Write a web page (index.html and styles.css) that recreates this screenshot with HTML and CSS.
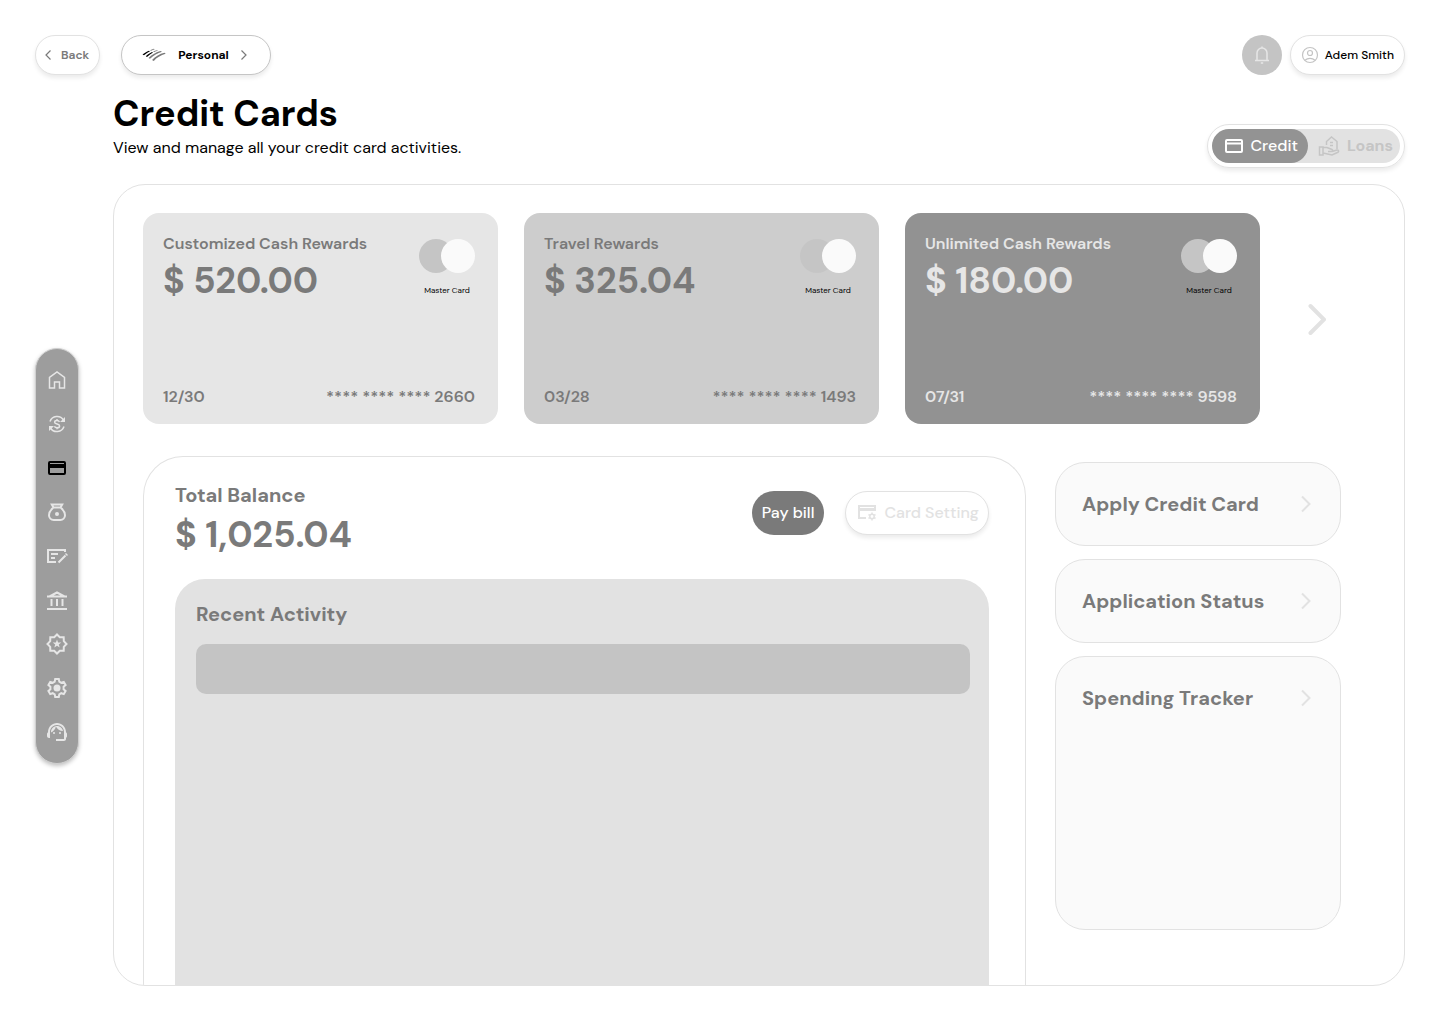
FILE: index.html
```
<!DOCTYPE html>
<html lang="en">
<head>
    <meta charset="UTF-8">
    <meta name="viewport" content="width=device-width, initial-scale=1.0">
    <title>Credit Cards</title>
    <link rel="stylesheet" href="styles.css">
</head>
<body>
    <header class="topbar">
        <button class="pill back">
            <svg width="6" height="10" viewBox="0 0 6 10"><path d="M5.500 .5 1 5l4.500 4.500"/></svg>
            Back
        </button>
        <button class="pill account">
            <svg class="logo" width="24" height="14" viewBox="0 0 24 14">
                <path class="dark" d="M.5 6.600C2.500 5 4.500 3.700 7 2.700l1 .5C6 4.300 4 5.700 2 7.300zM3.800 8.300C5.500 6.700 7.500 5.200 10 4l1 .5C9 5.800 7 7.300 5 9z"/>
                <path d="M8 2.200c1.300-.6 2.500-1 3.800-1.400l1 .5c-1.400.4-2.700.8-3.800 1.400zM11 3.500c1.400-.6 2.700-1 4-1.300l1 .5c-1.400.3-2.700.7-3.800 1.300zM6.500 10C10 6.500 14 4.200 18.500 3l1.500.8C15.500 5.200 11.500 7.500 8 10.700zM10 12C13.500 8.600 17.500 5.900 22.500 4.800l1.200 1C18.500 7.300 14.800 9.600 11.800 13z"/>
            </svg>
            <span>Personal</span>
            <svg width="6" height="10" viewBox="0 0 6 10"><path d="M.5 .5 5 5 .5 9.500"/></svg>
        </button>
        <button class="bell" aria-label="Notifications">
            <svg width="16" height="20" viewBox="0 0 16 20"><path d="M1 15.500h14M3 15.500V8a5 5 0 0 1 10 0v7.500M8 3V1.500M6.800 18h2.400"/></svg>
        </button>
        <button class="pill user">
            <svg width="18" height="18" viewBox="0 0 18 18"><circle cx="9" cy="9" r="7.500"/><circle cx="9" cy="7" r="2.500"/><path d="M4 14.300c2.800-2.700 7.200-2.700 10 0"/></svg>
            Adem Smith
        </button>
    </header>

    <div class="layout">
        <nav class="sidebar">
            <a href="#" aria-label="Home">
                <svg viewBox="0 0 24 24"><path d="M4.500 20V9.500L12 4l7.500 5.500V20h-5v-6h-5v6z"/></svg>
            </a>
            <a href="#" aria-label="Transfers">
                <svg viewBox="0 0 24 24"><path d="M5 9.500A7.500 7.500 0 0 1 18.500 8M19 14.500A7.500 7.500 0 0 1 5.500 16M14.500 9.800C14 8.900 13.200 8.500 12 8.500c-1.400 0-2.400.6-2.400 1.700 0 2.400 5 1.200 5 3.700 0 1.100-1 1.800-2.500 1.800-1.400 0-2.300-.6-2.700-1.500M12 7v1.500M12 15.700v1.500"/><path class="fill" d="M20 5v5h-5zM4 19v-5h5z"/></svg>
            </a>
            <a href="#" class="active" aria-label="Credit cards">
                <svg class="bold" viewBox="0 0 24 24"><rect x="4" y="6" width="16" height="12" rx="1"/><path class="fill" d="M4 8h16v4H4z"/></svg>
            </a>
            <a href="#" aria-label="Savings">
                <svg class="bold" viewBox="0 0 24 24"><path d="M8.500 7.500 6.800 4.500h10.400l-1.700 3h-7C5.500 10 4 12.500 4 15.300A4.700 4.700 0 0 0 8.700 20h6.600a4.700 4.700 0 0 0 4.700-4.700c0-2.800-1.500-5.300-4.500-7.800"/><circle class="fill" cx="12" cy="14" r="2"/></svg>
            </a>
            <a href="#" aria-label="Checks">
                <svg viewBox="0 0 24 24"><path class="bold" d="M11 18H3V6h17v2M6 10h7M6 14h4M13.500 18.500l7-7"/><path d="m20.500 9.500 2 2"/></svg>
            </a>
            <a href="#" aria-label="Bank">
                <svg class="bold" viewBox="0 0 24 24"><path d="M2 21h20M4.500 8.500h15L12 4.500zM2 8.500h20M6.500 11v7M12 11v7M17.500 11v7"/></svg>
            </a>
            <a href="#" aria-label="Rewards">
                <svg class="bold" viewBox="0 0 24 24"><path d="m12 2.500 2.800 2.700 3.900.1.100 3.900L21.500 12l-2.700 2.800-.1 3.900-3.900.1L12 21.500l-2.800-2.700-3.900-.1-.1-3.900L2.500 12l2.700-2.800.1-3.900 3.900-.1z"/><path class="fill" d="m12 7.500 1.100 3h3.200l-2.500 1.900.9 3.100-2.700-1.800-2.700 1.800.9-3.100-2.500-1.900h3.200z"/></svg>
            </a>
            <a href="#" aria-label="Settings">
                <svg class="bold" viewBox="0 0 24 24"><path d="M10.200 3h3.600l.5 2.600 2 1.200 2.500-.9 1.800 3.100-2 1.700v2.600l2 1.700-1.800 3.100-2.500-.9-2 1.200-.5 2.600h-3.600l-.5-2.600-2-1.200-2.500.9L3.400 15l2-1.700v-2.600L3.400 9l1.800-3.100 2.500.9 2-1.200z"/><circle class="fill" cx="12" cy="12" r="3.500"/></svg>
            </a>
            <a href="#" aria-label="Support">
                <svg viewBox="0 0 24 24"><path class="fill" d="M21 12.220C21 6.730 16.740 3 12 3c-4.690 0-9 3.650-9 9.280-.6.340-1 .980-1 1.720v2c0 1.100.9 2 2 2h1v-6.100c0-3.870 3.130-7 7-7s7 3.130 7 7V19h-8v2h8c1.100 0 2-.9 2-2v-1.220c.590-.310 1-.920 1-1.640v-2.300c0-.7-.410-1.310-1-1.620z"/><circle class="fill" cx="9" cy="13" r="1"/><circle class="fill" cx="15" cy="13" r="1"/><path class="fill" d="M18 11.030C17.520 8.180 15.040 6 12.050 6c-3.030 0-6.290 2.510-6.030 6.450 2.470-1.010 4.330-3.210 4.860-5.890 1.310 2.630 4 4.440 7.120 4.470z"/></svg>
            </a>
        </nav>

        <main class="content">
            <div class="heading">
                <div class="heading-text">
                    <h1>Credit Cards</h1>
                    <p>View and manage all your credit card activities.</p>
                </div>
                <div class="switch">
                    <button class="tab selected">
                        <svg width="20" height="16" viewBox="0 0 20 16"><rect x="2" y="2" width="16" height="12" rx="1"/><path d="M2 5.500h16"/></svg>
                        Credit
                    </button>
                    <button class="tab">
                        <svg width="22" height="22" viewBox="0 0 22 22"><path d="M8.500 10V6.500L13.500 2l5.500 4.500V14M12 7.500h3M12 10.500h3M1.500 12H5v8H1.500zM5 12.500h4l5 2c1 .5.800 2-.5 2H10M14 16.500l5-1.500c1.500-.2 2.200 1.500 1 2.300L14 20l-9-2"/></svg>
                        Loans
                    </button>
                </div>
            </div>

            <section class="panel">
                <div class="cards">
                    <article class="card card-light">
                        <div class="card-top">
                            <div>
                                <h2>Customized Cash Rewards</h2>
                                <p class="amount">$ 520.00</p>
                            </div>
                            <div class="brand">
                                <div class="circles"><i></i><i></i></div>
                                <span>Master Card</span>
                            </div>
                        </div>
                        <div class="card-bottom"><span>12/30</span><span>**** **** **** 2660</span></div>
                    </article>
                    <article class="card card-medium">
                        <div class="card-top">
                            <div>
                                <h2>Travel Rewards</h2>
                                <p class="amount">$ 325.04</p>
                            </div>
                            <div class="brand">
                                <div class="circles"><i></i><i></i></div>
                                <span>Master Card</span>
                            </div>
                        </div>
                        <div class="card-bottom"><span>03/28</span><span>**** **** **** 1493</span></div>
                    </article>
                    <article class="card card-dark">
                        <div class="card-top">
                            <div>
                                <h2>Unlimited Cash Rewards</h2>
                                <p class="amount">$ 180.00</p>
                            </div>
                            <div class="brand">
                                <div class="circles"><i></i><i></i></div>
                                <span>Master Card</span>
                            </div>
                        </div>
                        <div class="card-bottom"><span>07/31</span><span>**** **** **** 9598</span></div>
                    </article>
                    <button class="next" aria-label="Next card">
                        <svg width="18" height="32" viewBox="0 0 18 32"><path d="m2.500 3 13.500 13.500L2.500 30"/></svg>
                    </button>
                </div>

                <div class="details">
                    <section class="balance">
                        <div class="balance-top">
                            <div>
                                <h2>Total Balance</h2>
                                <p class="amount">$ 1,025.04</p>
                            </div>
                            <div class="actions">
                                <button class="pay">Pay bill</button>
                                <button class="pill setting">
                                    <svg width="20" height="18" viewBox="0 0 20 18"><path class="bold" d="M9 14H2V2h16v5"/><path class="fill" d="M2 4h16v3H2z"/><circle cx="15" cy="12.500" r="2.200"/><path d="M15 8.500V10M15 15v1.500M11.500 10.500l1.300.8M17.200 13.700l1.300.8M11.500 14.500l1.300-.8M17.200 11.300l1.300-.8"/></svg>
                                    Card Setting
                                </button>
                            </div>
                        </div>
                        <div class="activity">
                            <h2>Recent Activity</h2>
                            <div class="activity-row"></div>
                        </div>
                    </section>

                    <aside class="links">
                        <a href="#" class="link-card">
                            Apply Credit Card
                            <svg width="10" height="18" viewBox="0 0 10 18"><path d="m1 1.500 7.500 7.500L1 16.500"/></svg>
                        </a>
                        <a href="#" class="link-card">
                            Application Status
                            <svg width="10" height="18" viewBox="0 0 10 18"><path d="m1 1.500 7.500 7.500L1 16.500"/></svg>
                        </a>
                        <a href="#" class="link-card tracker">
                            Spending Tracker
                            <svg width="10" height="18" viewBox="0 0 10 18"><path d="m1 1.500 7.500 7.500L1 16.500"/></svg>
                        </a>
                    </aside>
                </div>
            </section>
        </main>
    </div>
</body>
</html>
```
FILE: styles.css
```
* {
    box-sizing: border-box;
}
body {
    font-family: "DM Sans", Inter, sans-serif;
    font-size: 16px;
    margin: 0;
    padding: 35px 35px 38px;
    height: 100vh;
    display: flex;
    flex-direction: column;
    background-color: #fff;
    color: #000;
}
h1, h2, p {
    margin: 0;
}
button {
    font-family: inherit;
    border: none;
    padding: 0;
    cursor: pointer;
}
a {
    text-decoration: none;
}
svg {
    fill: none;
    stroke: currentColor;
    stroke-width: 1.5;
    flex-shrink: 0;
}
.bold {
    stroke-width: 2;
}
.fill {
    fill: currentColor;
    stroke: none;
}

/* top bar */
.topbar {
    display: flex;
    align-items: center;
    height: 40px;
}
.pill {
    display: flex;
    align-items: center;
    height: 40px;
    background-color: #fff;
    border: 1px solid #e2e2e2;
    border-radius: 22px;
    box-shadow: 0 3px 4px rgba(0, 0, 0, 0.08);
    font-size: 12px;
}
.back {
    gap: 10px;
    padding: 0 10px 0 9px;
    margin-right: 21px;
    color: #7a7a7a;
    font-weight: 600;
}
.account {
    padding: 0 23px 0 20px;
    border-color: #c5c5c5;
    color: #7a7a7a;
}
.account span {
    color: #000;
    font-weight: 700;
    margin: 0 12px;
}
.topbar .pill svg {
    stroke-width: 1.2;
}
.logo {
    fill: #7a7a7a;
    stroke: none;
}
.logo .dark {
    fill: #000;
}
.bell {
    display: flex;
    align-items: center;
    justify-content: center;
    width: 40px;
    height: 40px;
    margin-left: auto;
    margin-right: 8px;
    border-radius: 50%;
    background-color: #c4c4c4;
    color: #e6e6e6;
}
.user {
    gap: 6px;
    padding: 0 10px;
    font-weight: 500;
}
.user svg {
    color: #c4c4c4;
}

/* sidebar */
.layout {
    display: flex;
    align-items: stretch;
    gap: 34px;
    flex: 1;
    min-height: 0;
    margin-top: 19px;
}
.sidebar {
    display: flex;
    flex-direction: column;
    gap: 20px;
    align-self: center;
    align-items: center;
    width: 44px;
    margin-top: 32px;
    padding: 19px 0;
    border-radius: 22px;
    background-color: #9d9d9d;
    border: 1px solid #d0d0d0;
    box-shadow: 0 2px 4px rgba(0, 0, 0, 0.25);
}
.sidebar a {
    height: 24px;
    color: #e6e6e6;
}
.sidebar .active {
    color: #000;
}
.sidebar svg {
    width: 24px;
    height: 24px;
}

/* heading */
.content {
    display: flex;
    flex-direction: column;
    flex: 1;
    min-width: 0;
}
.heading {
    display: flex;
    justify-content: space-between;
    align-items: flex-end;
    margin-bottom: 16px;
}
.heading-text {
    padding-bottom: 8px;
}
h1 {
    font-size: 36px;
    line-height: 40px;
    font-weight: 700;
}
.heading p {
    line-height: 24px;
    margin-top: 2px;
}
.switch {
    display: flex;
    padding: 4px;
    height: 44px;
    border: 1px solid #e2e2e2;
    border-radius: 22px;
    box-shadow: 0 3px 4px rgba(0, 0, 0, 0.08);
}
.tab {
    display: flex;
    align-items: center;
    gap: 7px;
    padding: 0 7px 0 27px;
    margin-left: -17px;
    border-radius: 0 17px 17px 0;
    background-color: #e2e2e2;
    color: #c5c5c5;
    font-size: 16px;
    line-height: 22px;
    font-weight: 700;
}
.switch .selected {
    position: relative;
    margin-left: 0;
    padding: 0 10px 0 12px;
    border-radius: 17px;
    background-color: #939393;
    color: #fff;
    font-weight: 500;
}
.selected svg {
    stroke-width: 2;
}

/* cards */
.panel {
    display: flex;
    flex-direction: column;
    gap: 32px;
    flex: 1;
    min-height: 0;
    padding: 28px 30px 0 29px;
    border: 1px solid #e2e2e2;
    border-radius: 32px;
    overflow: hidden;
}
.cards {
    display: grid;
    grid-template-columns: repeat(3, 1fr) 88px;
    gap: 26px;
}
.card {
    display: flex;
    flex-direction: column;
    justify-content: space-between;
    height: 211px;
    padding: 20px 23px 16px 20px;
    border-radius: 16px;
    color: #7a7a7a;
}
.card-light {
    background-color: #e6e6e6;
}
.card-medium {
    background-color: #cdcdcd;
}
.card-dark {
    background-color: #929292;
    color: #e6e6e6;
}
.card-top, .card-bottom {
    display: flex;
    justify-content: space-between;
}
.card h2 {
    font-size: 16px;
    line-height: 22px;
    font-weight: 600;
}
.amount {
    font-size: 36px;
    line-height: 40px;
    font-weight: 700;
    margin-top: 6px;
}
.brand {
    display: flex;
    flex-direction: column;
    align-items: center;
    gap: 12px;
    padding-top: 6px;
    font-size: 8px;
    line-height: 10px;
    color: #000;
}
.circles {
    display: flex;
}
.circles i {
    width: 34px;
    height: 34px;
    border-radius: 50%;
    background-color: #c5c5c5;
}
.circles i:last-child {
    margin-left: -12px;
    background-color: #fafafa;
}
.card-bottom {
    line-height: 22px;
    font-weight: 600;
}
.next {
    display: flex;
    align-items: center;
    justify-content: center;
    margin-left: -26px;
    background: none;
    color: #e2e2e2;
}
.next svg {
    stroke-width: 4;
    stroke-linecap: round;
}

/* balance */
.details {
    display: flex;
    gap: 29px;
    flex: 1;
    min-height: 0;
    padding-right: 33px;
}
.balance {
    display: flex;
    flex-direction: column;
    flex: 1;
    padding: 26px 36px 0 31px;
    border: 1px solid #e2e2e2;
    border-bottom: none;
    border-radius: 40px 40px 0 0;
    color: #7a7a7a;
}
.balance h2 {
    font-size: 20px;
    line-height: 24px;
    font-weight: 700;
}
.balance-top {
    display: flex;
    justify-content: space-between;
    align-items: flex-start;
    margin-bottom: 24px;
}
.balance .amount {
    margin-top: 8px;
}
.actions {
    display: flex;
    gap: 21px;
    padding-top: 8px;
}
.pay {
    height: 44px;
    padding: 0 10px;
    border-radius: 22px;
    background-color: #7a7a7a;
    color: #fff;
    font-size: 16px;
    line-height: 22px;
    font-weight: 500;
}
.setting {
    height: 44px;
    gap: 7px;
    padding: 0 9px 0 11px;
    color: #e2e2e2;
    font-size: 16px;
    line-height: 22px;
    font-weight: 500;
}
.activity {
    flex: 1;
    padding: 23px 19px 0 21px;
    border-radius: 30px 30px 0 0;
    background-color: #e2e2e2;
}
.activity-row {
    height: 50px;
    margin-top: 18px;
    border-radius: 10px;
    background-color: #c4c4c4;
}

/* right column */
.links {
    display: flex;
    flex-direction: column;
    gap: 13px;
    width: 286px;
    padding-top: 6px;
}
.link-card {
    display: flex;
    justify-content: space-between;
    padding: 29px 29px 29px 26px;
    border: 1px solid #e2e2e2;
    border-radius: 30px;
    background-color: #fafafa;
    color: #7a7a7a;
    font-size: 20px;
    line-height: 24px;
    font-weight: 700;
}
.link-card svg {
    margin-top: 3px;
    color: #e2e2e2;
    stroke-width: 2;
}
.tracker {
    height: 274px;
}
```
